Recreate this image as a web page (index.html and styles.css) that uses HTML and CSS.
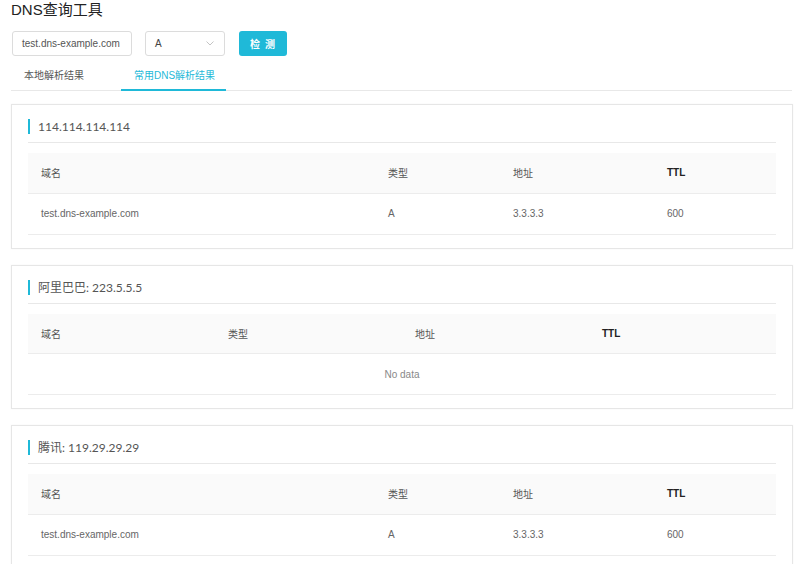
FILE: index.html
```html
<!DOCTYPE html>
<html lang="zh-CN">
<head>
<meta charset="utf-8">
<title>DNS查询工具</title>
<link rel="stylesheet" href="styles.css">
</head>
<body>
<div class="page">
  <h1 class="page-title">DNS查询工具</h1>
  <div class="query-form">
    <div class="input">test.dns-example.com</div>
    <div class="select">
      <span>A</span>
      <svg class="chev" width="8" height="5" viewBox="0 0 8 5"><path d="M0.5 0.5 L4 4 L7.5 0.5" fill="none" stroke="#c4c4c4" stroke-width="1"/></svg>
    </div>
    <button class="btn">检 测</button>
  </div>
  <div class="tabs">
    <div class="tab">本地解析结果</div>
    <div class="tab active">常用DNS解析结果</div>
  </div>

  <div class="card">
    <div class="card-title">114.114.114.114</div>
    <table class="tbl auto">
      <thead><tr><th class="c1">域名</th><th class="c2">类型</th><th class="c3">地址</th><th class="c4 ttl">TTL</th></tr></thead>
      <tbody><tr><td>test.dns-example.com</td><td>A</td><td>3.3.3.3</td><td>600</td></tr></tbody>
    </table>
  </div>

  <div class="card">
    <div class="card-title">阿里巴巴: 223.5.5.5</div>
    <table class="tbl even">
      <thead><tr><th>域名</th><th>类型</th><th>地址</th><th class="ttl">TTL</th></tr></thead>
      <tbody><tr><td class="empty" colspan="4">No data</td></tr></tbody>
    </table>
  </div>

  <div class="card">
    <div class="card-title">腾讯: 119.29.29.29</div>
    <table class="tbl auto">
      <thead><tr><th class="c1">域名</th><th class="c2">类型</th><th class="c3">地址</th><th class="c4 ttl">TTL</th></tr></thead>
      <tbody><tr><td>test.dns-example.com</td><td>A</td><td>3.3.3.3</td><td>600</td></tr></tbody>
    </table>
  </div>
</div>
</body>
</html>
```

FILE: styles.css
```css
* { box-sizing: border-box; }
html, body { margin: 0; padding: 0; background: #fff; }
body {
  font-family: "Liberation Sans", Arial, "Noto Sans CJK SC", sans-serif;
  font-size: 10px;
  color: #666;
}
.page { padding: 0 7px 0 11px; }
.page-title {
  margin: 0;
  font-size: 15px;
  line-height: 20px;
  font-weight: normal;
  color: #222;
}
.query-form {
  display: flex;
  align-items: center;
  margin-top: 11px;
  height: 25px;
}
.input {
  width: 120px;
  height: 25px;
  margin-left: 1px;
  border: 1px solid #dcdcdc;
  border-radius: 3px;
  padding: 0 9px;
  line-height: 23px;
  font-size: 10px;
  color: #555;
}
.select {
  width: 80px;
  height: 25px;
  margin-left: 13px;
  border: 1px solid #dcdcdc;
  border-radius: 3px;
  display: flex;
  align-items: center;
  justify-content: space-between;
  padding: 0 10px 0 9px;
  color: #444;
  font-size: 10px;
}
.chev { display: block; }
.btn {
  margin-left: 14px;
  width: 48px;
  height: 25px;
  border: none;
  border-radius: 3px;
  background: #1fb9d8;
  color: #fff;
  font-family: inherit;
  font-size: 10px;
  font-weight: bold;
  letter-spacing: 1px;
  padding: 0;
}
.tabs {
  display: flex;
  margin-top: 6px;
  border-bottom: 1px solid #e8e8e8;
  margin-right: 1px;
}
.tab {
  padding: 0 13px;
  height: 29px;
  line-height: 27px;
  margin-right: 24px;
  font-size: 10px;
  color: #555;
  border-bottom: 2px solid transparent;
  margin-bottom: -1px;
}
.tab.active {
  color: #1fb9d8;
  border-bottom-color: #1fb9d8;
  padding: 0 11px 0 13px;
}
.card {
  margin-top: 13px;
  border: 1px solid #e6e6e6;
  box-shadow: 0 0 2px rgba(0,0,0,0.04);
  padding: 14px 16px 13px;
}
.card + .card { margin-top: 16px; }
.card-title {
  position: relative;
  height: 24px;
  padding-left: 10px;
  border-bottom: 1px solid #e8e8e8;
  font-family: Lato, "Noto Sans CJK SC", sans-serif;
  font-size: 12px;
  line-height: 16px;
  color: #555;
}
.card-title::before {
  content: "";
  position: absolute;
  left: 0;
  top: 0;
  width: 2px;
  height: 15px;
  background: #1fb9d8;
}
.tbl {
  margin-top: 10px;
  width: 100%;
  border-collapse: collapse;
  table-layout: fixed;
}
.tbl th {
  background: #fafafa;
  height: 40px;
  padding: 0 13px;
  text-align: left;
  font-weight: normal;
  color: #555;
  border-bottom: 1px solid #ececec;
  font-size: 10px;
}
.tbl th.ttl { font-weight: bold; color: #222; }
.tbl td {
  height: 41px;
  padding: 0 13px;
  border-bottom: 1px solid #ececec;
  color: #666;
  font-size: 10px;
}
.tbl td.empty { text-align: center; color: #888; }
.auto .c1 { width: 347px; }
.auto .c2 { width: 125px; }
.auto .c3 { width: 154px; }
.auto .c4 { width: 122px; }
.even th { width: 25%; }
```
